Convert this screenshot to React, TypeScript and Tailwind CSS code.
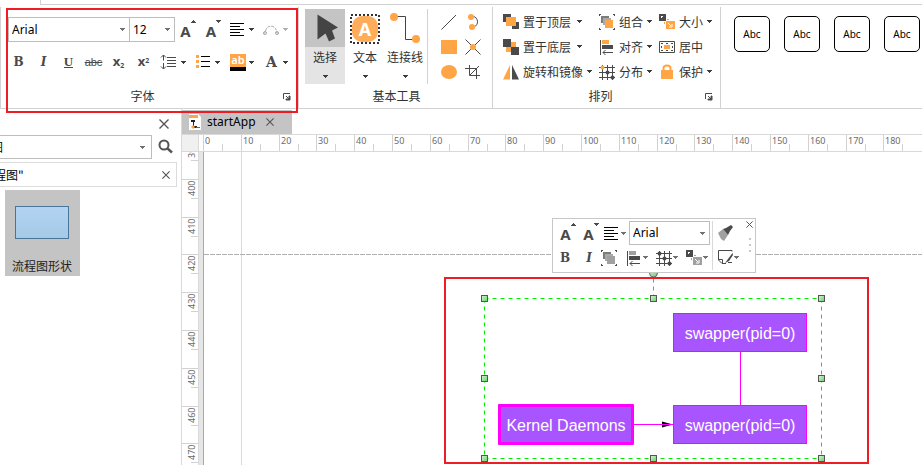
import type { ReactNode } from "react";

const ORANGE = "#ffa545";
const DARK = "#4a4a4a";
const GREY = "#a0a0a0";

type Tint = { accent?: string };

function Caret({ className = "text-[#3c3c3c]" }: { className?: string }) {
  return (
    <svg width="5" height="3" viewBox="0 0 5 3" className={`shrink-0 ${className}`} aria-hidden="true">
      <path d="M0 0H5V1H4V2H3V3H2V2H1V1H0Z" fill="currentColor" shapeRendering="crispEdges" />
    </svg>
  );
}

function Icon({ w = 16, h = 16, children }: { w?: number; h?: number; children: ReactNode }) {
  return (
    <svg width={w} height={h} viewBox={`0 0 ${w} ${h}`} className="block shrink-0" fill="none" aria-hidden="true">
      {children}
    </svg>
  );
}

function FontSelect({ label, options, className }: { label: string; options: string[]; className: string }) {
  return (
    <div className={`flex shrink-0 items-center border border-[#bdbdbd] bg-white pr-1 ${className}`}>
      <select
        aria-label={label}
        className="h-full w-full min-w-0 appearance-none bg-transparent pl-[3px] font-['Noto_Sans',sans-serif] text-[12px] leading-4 text-black outline-none"
      >
        {options.map((o) => (
          <option key={o}>{o}</option>
        ))}
      </select>
      <Caret className="text-[#707070]" />
    </div>
  );
}

function ToolButton({ label, className = "w-[25px] justify-center", children }: { label: string; className?: string; children: ReactNode }) {
  return (
    <button type="button" aria-label={label} title={label} className={`flex h-6 shrink-0 items-center text-[#4a4a4a] ${className}`}>
      {children}
    </button>
  );
}

function DropButton({ label, muted, children }: { label: string; muted?: boolean; children: ReactNode }) {
  return (
    <button type="button" aria-label={label} title={label} className="flex h-6 w-[34px] shrink-0 items-center gap-[3px] pl-[2px] text-[#4a4a4a]">
      <span className="flex w-[18px] items-center">{children}</span>
      <Caret className={muted ? "text-[#b0b0b0]" : undefined} />
    </button>
  );
}

function GrowLetter({ up }: { up?: boolean }) {
  return (
    <span className="flex items-start">
      <span className="pt-[2px] font-['Noto_Sans',sans-serif] text-[15px] font-bold leading-[18px]">A</span>
      <Icon w={5} h={3}>
        <path d={up ? "M2 0H3V1H4V2H5V3H0V2H1V1H2Z" : "M0 0H5V1H4V2H3V3H2V2H1V1H0Z"} fill={DARK} />
      </Icon>
    </span>
  );
}

const AlignLines = () => (
  <Icon w={18} h={15}>
    <path d="M2 1.5H16M2 4.5H12M2 7.5H16M2 10.5H12M2 13.5H16" stroke="#000" strokeWidth="1" />
  </Icon>
);

const GroupIcon = ({ accent = ORANGE }: Tint) => (
  <Icon>
    <path d="M0 0H2V1H1V2H0ZM14 0H16V2H15V1H14ZM0 14H1V15H2V16H0ZM15 14H16V16H14V15H15Z" fill={DARK} />
    <path d="M2 2H10V9H2Z" fill="#7c7c7c" />
    <path d="M4 4H12V11H4Z" fill="#a9a9a9" />
    <path d="M6 6H14V14H6Z" fill={accent} />
  </Icon>
);

const AlignIcon = ({ accent = ORANGE }: Tint) => (
  <Icon>
    <path d="M1.5 1V16" stroke={DARK} />
    <path d="M3 1H10V5H3Z" fill={accent} />
    <path d="M3 6H14V10H3Z" fill={DARK} />
    <path d="M4 13.5H14M6.5 11L4 13.5L6.5 16" stroke={DARK} />
  </Icon>
);

const GridIcon = ({ accent = ORANGE }: Tint) => (
  <Icon>
    <path d="M3.5 1V16M8.5 1V16M13.5 1V16M0 3.5H16M0 8.5H16M0 13.5H16" stroke={DARK} />
    <circle cx="3.5" cy="3.5" r="2" fill={accent} />
    <circle cx="8.5" cy="8.5" r="2" fill={DARK} />
    <circle cx="13.5" cy="13.5" r="2" fill={DARK} />
  </Icon>
);

const SizeIcon = ({ accent = ORANGE }: Tint) => (
  <Icon>
    <path d="M0 0H7V7H0Z" fill={DARK} />
    <path d="M7 7H16V15H7Z" fill={accent} />
    <path d="M2 2H4V3H3V4H2Z" fill="#fff" />
    <path d="M9 9L12 12M13 10V13H10" stroke="#fff" />
    <path d="M8 5H10V6H8ZM5 8H6V10H5Z" fill={accent} />
  </Icon>
);

const FrontIcon = () => (
  <Icon>
    <path d="M0 0H8V8H0ZM9 8H16V15H9Z" fill={DARK} />
    <path d="M3 3H13V12H3Z" fill={ORANGE} />
  </Icon>
);

const BackIcon = () => (
  <Icon>
    <path d="M3 3H13V13H3Z" fill={ORANGE} />
    <path d="M0 0H8V8H0ZM8 8H16V16H8Z" fill={DARK} />
  </Icon>
);

const MirrorIcon = () => (
  <Icon>
    <path d="M0 15.5L7 1V15.5Z" fill={ORANGE} />
    <path d="M16 15.5L9 1V15.5Z" fill={DARK} />
  </Icon>
);

const CenterIcon = () => (
  <Icon>
    <path d="M0.5 2.5H15.5V13.5H0.5Z" stroke={DARK} />
    <path d="M5 6H11V10H5Z" fill={ORANGE} />
    <path d="M2 4H4V5H2ZM12 4H14V5H12ZM2 11H4V12H2ZM12 11H14V12H12ZM2 7H3V9H2ZM13 7H14V9H13ZM7 4H9V5H7ZM7 11H9V12H7Z" fill={DARK} />
  </Icon>
);

const LockIcon = () => (
  <Icon>
    <path d="M4.5 7V4C4.5 0.5 11.5 0.5 11.5 4V7" stroke={ORANGE} strokeWidth="2" />
    <path d="M2 6H14V15H2Z" fill={ORANGE} />
  </Icon>
);

function Launcher({ className }: { className: string }) {
  return (
    <button type="button" aria-label="更多" className={`absolute ${className}`}>
      <Icon w={8} h={8}>
        <path d="M0.5 6V0.5H7M3 3L6 6" stroke={DARK} />
        <path d="M7 3V7H3V6H6V3Z" fill={DARK} stroke={DARK} />
      </Icon>
    </button>
  );
}

function RibbonGroup({ title, className = "", launcher, children }: { title: string; className?: string; launcher?: string; children: ReactNode }) {
  return (
    <section className={`relative flex shrink-0 flex-col border-r border-[#d2d2d2] ${className}`}>
      <div className="h-[77px] pt-[2px]">{children}</div>
      <h2 className="h-6 text-center text-[12px] leading-6 text-[#333]">{title}</h2>
      {launcher && <Launcher className={launcher} />}
    </section>
  );
}

function BigTool({ label, active, children }: { label: string; active?: boolean; children: ReactNode }) {
  return (
    <button type="button" className={`flex h-[75px] w-10 flex-col items-center text-[12px] text-[#333] ${active ? "bg-[#e4e4e4]" : ""}`}>
      <span className={`h-[38px] w-10 ${active ? "bg-[#c4c4c4]" : ""}`}>{children}</span>
      <span className="mb-2 whitespace-nowrap leading-5">{label}</span>
      <Caret />
    </button>
  );
}

function ArrangeItem({ icon, label, caret = true, near }: { icon: ReactNode; label: string; caret?: boolean; near?: boolean }) {
  return (
    <button type="button" className="flex h-[25px] items-center gap-1 whitespace-nowrap text-[12px] leading-4 text-[#333]">
      {icon}
      <span className={near ? "" : "pr-[2px]"}>{label}</span>
      {caret && <Caret />}
    </button>
  );
}

function FontGroup() {
  return (
    <RibbonGroup title="字体" className="w-[299px] border-l pr-[14px]" launcher="left-[282px] top-[86px]">
      <div className="flex items-center pl-[7px] pt-2">
        <FontSelect label="字体名称" options={["Arial", "Times New Roman"]} className="h-[25px] w-[122px]" />
        <FontSelect label="字号" options={["12", "14", "16"]} className="-ml-px h-[25px] w-[46px]" />
        <ToolButton label="增大字号" className="w-[26px] justify-center"><GrowLetter up /></ToolButton>
        <ToolButton label="减小字号" className="w-[25px] justify-center"><GrowLetter /></ToolButton>
        <DropButton label="文本对齐"><AlignLines /></DropButton>
        <DropButton label="弧形文字" muted>
          <Icon w={18}>
            <path d="M3.5 9C5 2.5 13 2.5 14.5 9M1 12L4 10M14 10L17 12" stroke="#a8a8a8" strokeDasharray="3 1" />
            <circle cx="3" cy="11" r="1.5" stroke="#a8a8a8" />
            <circle cx="15" cy="11" r="1.5" stroke="#a8a8a8" />
          </Icon>
        </DropButton>
      </div>
      <div className="flex items-center pl-[5px] pt-2">
        <ToolButton label="加粗"><span className="font-['DejaVu_Serif',serif] text-[12px] font-bold">B</span></ToolButton>
        <ToolButton label="倾斜"><span className="font-['DejaVu_Serif',serif] text-[12px] font-bold italic">I</span></ToolButton>
        <ToolButton label="下划线"><span className="border-b border-[#4a4a4a] font-['Liberation_Serif',serif] text-[13px] font-bold leading-[11px]">U</span></ToolButton>
        <ToolButton label="删除线"><span className="font-['Liberation_Sans',sans-serif] text-[11px] line-through">abc</span></ToolButton>
        <ToolButton label="下标"><span className="font-['Noto_Sans',sans-serif] text-[13px] font-bold">x<sub className="text-[7px]">2</sub></span></ToolButton>
        <ToolButton label="上标"><span className="font-['Noto_Sans',sans-serif] text-[13px] font-bold">x<sup className="text-[7px]">2</sup></span></ToolButton>
        <div className="flex pl-[2px]">
          <DropButton label="行距">
            <Icon w={18}>
              <path d="M3.5 1V6.5M1 3.5L3.5 1L6 3.5M3.5 9V15M1 12.5L3.5 15L6 12.5" stroke={DARK} />
              <path d="M7 3.5H16M7 6.5H16M7 9.5H16M7 12.5H16" stroke={DARK} />
            </Icon>
          </DropButton>
          <DropButton label="项目符号">
            <Icon w={18}>
              <path d="M2 1H5V4H2ZM2 6H5V9H2ZM2 11H5V14H2Z" fill={ORANGE} />
              <path d="M7 2.5H16M7 7.5H16M7 12.5H16" stroke="#000" />
            </Icon>
          </DropButton>
          <DropButton label="突出显示">
            <span className="ml-[2px] flex w-4 flex-col border-b-4 border-black bg-[#ffa545] pb-px text-center font-['Noto_Sans',sans-serif] text-[11px] font-semibold leading-3 text-white">
              ab
            </span>
          </DropButton>
          <DropButton label="字体颜色"><span className="ml-1 font-['DejaVu_Serif',serif] text-[14px] font-bold">A</span></DropButton>
        </div>
      </div>
    </RibbonGroup>
  );
}

function BasicTools() {
  return (
    <RibbonGroup title="基本工具" className="w-[194px] pl-[6px] pr-1">
      <div className="flex">
        <BigTool label="选择" active>
          <Icon w={40} h={38}>
            <path d="M12.5 5.5L33 18.5L27 21.5L30 29.5L24 32.5L20.5 24.5L12.5 30.5Z" fill="#444" />
          </Icon>
        </BigTool>
        <BigTool label="文本">
          <Icon w={40} h={38}>
            <rect x="6" y="6" width="28" height="28" stroke="#333" strokeWidth="2" strokeDasharray="2 2" />
            <rect x="7" y="7" width="26" height="26" rx="10" fill="#ffad5b" />
            <text x="20" y="27" textAnchor="middle" fontFamily="Noto Sans, sans-serif" fontWeight="700" fontSize="18" fill="#fff">A</text>
          </Icon>
        </BigTool>
        <BigTool label="连接线">
          <Icon w={40} h={38}>
            <path d="M9 7.5H20.5V30.5H31" stroke="#444" />
            <circle cx="9" cy="8" r="4" fill={ORANGE} />
            <circle cx="31" cy="30" r="4" fill={ORANGE} />
          </Icon>
        </BigTool>
        <div className="ml-[2px] grid grid-cols-[24px_24px] grid-rows-[25px_25px_25px] place-items-center border-l border-[#d2d2d2] pl-[9px]">
          <ToolButton label="直线"><Icon><path d="M0.5 15.5L15 1" stroke={DARK} /></Icon></ToolButton>
          <ToolButton label="弧线">
            <Icon>
              <path d="M7 2C14 3 14 11 9 13" stroke={DARK} />
              <circle cx="6" cy="3" r="3" fill={ORANGE} />
              <circle cx="7" cy="13" r="3" fill={ORANGE} />
            </Icon>
          </ToolButton>
          <ToolButton label="矩形"><Icon><path d="M0 1H16V15H0Z" fill={ORANGE} /></Icon></ToolButton>
          <ToolButton label="交叉">
            <Icon>
              <path d="M0.5 0.5L15.5 15.5M15.5 0.5L0.5 15.5" stroke={DARK} />
              <circle cx="8" cy="8" r="3" fill={ORANGE} />
            </Icon>
          </ToolButton>
          <ToolButton label="椭圆"><Icon><ellipse cx="8" cy="8" rx="8" ry="7" fill={ORANGE} /></Icon></ToolButton>
          <ToolButton label="裁剪">
            <Icon><path d="M4.5 1V11.5H15M0 4.5H11.5V15M5 11L14 2" stroke={DARK} /></Icon>
          </ToolButton>
        </div>
      </div>
    </RibbonGroup>
  );
}

function ArrangeGroup() {
  return (
    <RibbonGroup title="排列" className="w-[228px] pr-3" launcher="left-[212px] top-[86px]">
      <div className="grid grid-cols-[96px_60px_60px] pl-[10px]">
        <ArrangeItem icon={<FrontIcon />} label="置于顶层" />
        <ArrangeItem icon={<GroupIcon />} label="组合" near />
        <ArrangeItem icon={<SizeIcon />} label="大小" near />
        <ArrangeItem icon={<BackIcon />} label="置于底层" />
        <ArrangeItem icon={<AlignIcon />} label="对齐" near />
        <ArrangeItem icon={<CenterIcon />} label="居中" caret={false} />
        <ArrangeItem icon={<MirrorIcon />} label="旋转和镜像" near />
        <ArrangeItem icon={<GridIcon />} label="分布" near />
        <ArrangeItem icon={<LockIcon />} label="保护" near />
      </div>
    </RibbonGroup>
  );
}

function Ribbon() {
  return (
    <header className="relative">
      <div className="flex h-[5px] pl-10">
        <div className="flex-1 border-b border-l border-[#d2d2d2]" />
      </div>
      <div className="flex overflow-hidden border-b border-[#d2d2d2] pt-[2px]">
        <FontGroup />
        <BasicTools />
        <ArrangeGroup />
        <div className="flex gap-[14px] pl-[13px] pt-[9px]">
          {[1, 2, 3, 4].map((n) => (
            <button key={n} type="button" className="h-9 w-9 shrink-0 rounded-[5px] border border-black font-['Noto_Sans',sans-serif] text-[10px] text-black">
              Abc
            </button>
          ))}
        </div>
      </div>
      <div className="pointer-events-none absolute left-[6px] top-2 z-10 h-[105px] w-[292px] border-2 border-[#ee1c25]" />
    </header>
  );
}

function Cross({ size = 10 }: { size?: number }) {
  return (
    <svg width={size} height={size} viewBox="0 0 10 10" className="block" aria-hidden="true">
      <path d="M0.5 0.5L9.5 9.5M9.5 0.5L0.5 9.5" stroke="#555" strokeWidth="1.4" />
    </svg>
  );
}

function ShapePanel() {
  return (
    <aside className="w-[181px] shrink-0 overflow-hidden">
      <div className="flex h-[26px] items-center justify-end pr-3 pt-[3px]">
        <button type="button" aria-label="关闭面板"><Cross /></button>
      </div>
      <div className="flex items-center">
        <div className="flex h-6 w-[152px] items-center overflow-hidden border border-l-0 border-[#bdbdbd] pr-[6px]">
          <input aria-label="搜索形状" defaultValue="流程图" className="-ml-[33px] w-full flex-1 bg-transparent text-[12px] text-black outline-none" />
          <Caret className="text-[#707070]" />
        </div>
        <button type="button" aria-label="搜索" className="ml-[6px]">
          <Icon>
            <circle cx="6" cy="6" r="4.5" stroke="#555" strokeWidth="2" />
            <path d="M9.5 9.5L14 13.5" stroke="#555" strokeWidth="2.5" />
          </Icon>
        </button>
      </div>
      <div className="mt-[3px] flex h-[25px] w-[177px] items-center justify-between border border-l-0 border-[#dcdcdc] pr-[6px]">
        <span className="-ml-[6px] text-[12px] text-black">程图"</span>
        <button type="button" aria-label="关闭分类"><Cross size={8} /></button>
      </div>
      <button type="button" className="ml-[5px] mt-[3px] flex h-[86px] w-[75px] flex-col items-center bg-[#c4c4c4] pr-px pt-4 text-[12px] text-[#222]">
        <span className="h-[33px] w-[54px] border border-[#4b7598] bg-linear-to-b from-[#b2d4f2] to-[#a6c9e8]" />
        <span className="mt-[18px] leading-[18px]">流程图形状</span>
      </button>
    </aside>
  );
}

/* Ten ruler units take 37.8 px; every cell is snapped to whole pixels. */
const UNIT = 37.8;
const cell = (i: number) => Math.round((i + 1) * UNIT) - Math.round(i * UNIT);
const cellsIn = (length: number) => Array.from({ length: Math.max(1, Math.ceil(length / UNIT)) }, (_, i) => i);

function HorizontalRuler() {
  return (
    <div className="flex h-[18px] border-y border-[#d9d9d9]">
      <div className="w-[17px] shrink-0 border-r border-[#d9d9d9] bg-[#f0f0f0]" />
      <div className="flex min-w-0 flex-1 overflow-hidden pl-1">
        {cellsIn(window.innerWidth - 204).map((i) => (
          <div key={i} className="flex shrink-0 items-end border-l border-[#d2d2d2]" style={{ width: cell(i) }}>
            <span className="h-full w-[18px] pl-px font-['Noto_Sans',sans-serif] text-[9px] leading-[11px] text-[#6c6c6c]">{i * 10}</span>
            <span className="h-[7px] w-px bg-[#d2d2d2]" />
          </div>
        ))}
      </div>
    </div>
  );
}

function VerticalRuler() {
  return (
    <div className="w-[17px] shrink-0 overflow-hidden border-r border-[#d9d9d9]">
      <div className="-mt-[11px]">
        {cellsIn(window.innerHeight - 141).map((i) => (
          <div key={i} className="flex flex-col items-end border-t border-[#d2d2d2]" style={{ height: cell(i) }}>
            <span className="h-[18px] w-full shrink-0 rotate-180 pr-1 pb-px text-right font-['Noto_Sans',sans-serif] text-[9px] leading-[11px] text-[#6c6c6c] [writing-mode:vertical-rl]">
              {390 + i * 10}
            </span>
            <span className="h-px w-[7px] shrink-0 bg-[#d2d2d2]" />
          </div>
        ))}
      </div>
    </div>
  );
}

function MiniDrop({ label, className, children }: { label: string; className: string; children: ReactNode }) {
  return (
    <button type="button" aria-label={label} title={label} className={`flex h-6 shrink-0 items-center gap-px ${className}`}>
      {children}
      <Caret className="text-[#707070]" />
    </button>
  );
}

function MiniToolbar() {
  return (
    <div className="absolute left-[352px] top-[66px] z-10 flex w-[204px] border border-[#c8c8c8] bg-white py-[2px]">
      <div className="w-[160px] border-r border-[#d9d9d9]">
        <div className="flex h-6 items-center pl-[3px]">
          <ToolButton label="增大字号" className="w-6 justify-center"><GrowLetter up /></ToolButton>
          <ToolButton label="减小字号" className="w-[22px] justify-center"><GrowLetter /></ToolButton>
          <MiniDrop label="文本对齐" className="w-[27px]"><AlignLines /></MiniDrop>
          <FontSelect label="浮动栏字体" options={["Arial"]} className="h-6 w-[81px]" />
        </div>
        <div className="flex h-[25px] items-center">
          <ToolButton label="加粗" className="w-6 justify-center"><span className="font-['DejaVu_Serif',serif] text-[12px] font-bold">B</span></ToolButton>
          <ToolButton label="倾斜" className="w-6 justify-center"><span className="font-['DejaVu_Serif',serif] text-[12px] font-bold italic">I</span></ToolButton>
          <ToolButton label="组合" className="w-[25px]"><GroupIcon accent={GREY} /></ToolButton>
          <MiniDrop label="对齐" className="w-[30px]"><AlignIcon accent={GREY} /></MiniDrop>
          <MiniDrop label="分布" className="w-[30px]"><GridIcon accent={DARK} /></MiniDrop>
          <MiniDrop label="大小" className="w-6"><SizeIcon accent={GREY} /></MiniDrop>
        </div>
      </div>
      <div className="flex flex-col pl-1">
        <ToolButton label="格式刷" className="w-5">
          <Icon>
            <path d="M1 8L6 4L11 10L7 16L4 14L3 12Z" fill={GREY} />
            <path d="M6 4L9 3L14 0L16 2L13 6L11 10Z" fill={DARK} />
          </Icon>
        </ToolButton>
        <MiniDrop label="样式" className="w-6">
          <Icon>
            <path d="M15 2.5V1.5H1.5V11L5 14.5H9" stroke={DARK} />
            <path d="M15.5 4L11 10L8 14L12 12L16 6Z" fill={DARK} />
            <path d="M1 10.5H5.5V15M11 13.5H15" stroke={DARK} />
          </Icon>
        </MiniDrop>
      </div>
      <div className="flex flex-1 flex-col items-end gap-[10px] pr-[2px]">
        <button type="button" aria-label="关闭浮动栏"><Cross size={7} /></button>
        <span className="mr-[2px] flex flex-col gap-1">
          <i className="h-[2px] w-[2px] bg-[#c8c8c8]" />
          <i className="h-[2px] w-[2px] bg-[#c8c8c8]" />
          <i className="h-[2px] w-[2px] bg-[#c8c8c8]" />
        </span>
      </div>
    </div>
  );
}

const handles = [
  [284, 146], [453, 146], [621, 146],
  [284, 226], [621, 226],
  [284, 306], [453, 306], [621, 306],
];

function Node({ text, className }: { text: string; className: string }) {
  return (
    <div className={`absolute flex items-center justify-center whitespace-nowrap border-[#ff00ff] bg-[#a854ff] pt-[2px] font-['Liberation_Sans',Arial,sans-serif] text-[16px] text-white ${className}`}>
      {text}
    </div>
  );
}

function Canvas() {
  return (
    <main className="relative min-w-0 flex-1 overflow-hidden border-l border-[#e6e6e6]">
      <div className="absolute inset-y-0 left-0 w-1 border-r border-[#aaa] bg-[#e6e6e6]" />
      <div className="absolute inset-y-0 left-[41px] w-px bg-[#d9d9d9]" />
      <svg className="absolute left-1 top-[102px] h-px w-full" aria-hidden="true">
        <path d="M0 0.5H4000" stroke="#b0b0b0" strokeDasharray="5 1" />
      </svg>
      <svg className="absolute left-0 top-0" width="720" height="320" viewBox="0 0 720 320" fill="none" aria-hidden="true">
        <defs>
          <linearGradient id="handle" x1="0" y1="0" x2="1" y2="1">
            <stop offset="0" stopColor="#dcf5dc" />
            <stop offset="1" stopColor="#62cf62" />
          </linearGradient>
        </defs>
        <path d="M284.5 146.5H621.5M284.5 306.5H621.5M284.5 146.5V306.5M621.5 146.5V306.5M453.5 146.5V122" stroke="#00f000" strokeDasharray="4 4" />
        <circle cx="453.5" cy="121" r="4" fill="url(#handle)" stroke="#666" />
        <path d="M540.5 200V254" stroke="#ff00ff" />
        <path d="M462 269.5L473 272.5L462 275.5Z" fill="#000" />
        <path d="M434 272.5H473" stroke="#ff00ff" />
        {handles.map(([x, y]) => (
          <rect key={`${x}-${y}`} x={x - 2.5} y={y - 2.5} width="6" height="6" fill="url(#handle)" stroke="#555" />
        ))}
      </svg>
      <Node text="swapper(pid=0)" className="left-[473px] top-[161px] h-[39px] w-[134px] border" />
      <Node text="swapper(pid=0)" className="left-[473px] top-[253px] h-[39px] w-[134px] border" />
      <Node text="Kernel Daemons" className="left-[298px] top-[252px] h-[41px] w-[136px] rounded-[1px] border-[3px]" />
      <div className="pointer-events-none absolute left-[244px] top-[125px] z-20 h-[187px] w-[425px] border-2 border-[#ee1c25]" />
      <MiniToolbar />
    </main>
  );
}

function Editor() {
  return (
    <section className="flex min-w-0 flex-1 flex-col border-l border-[#d9d9d9]">
      <div className="flex h-[25px] pt-px">
        <div className="flex w-[110px] items-center bg-[#c4c4c4] pl-[7px]">
          <Icon w={12} h={16}>
            <path d="M0 0H9L12 3V16H0Z" fill="#fff" />
            <path d="M0 1H9V4H0Z" fill={ORANGE} />
            <path d="M2 6H6V8H5V12H8V14H5L4 12V8H2Z" fill="#222" />
            <path d="M4 11L6 13L4 15L2 13Z" fill={ORANGE} />
            <path d="M7 13.5H11" stroke="#666" />
          </Icon>
          <span className="ml-[6px] w-14 font-['Noto_Sans',sans-serif] text-[12px] text-black">startApp</span>
          <button type="button" aria-label="关闭 startApp" className="ml-[3px]"><Cross size={8} /></button>
        </div>
      </div>
      <HorizontalRuler />
      <div className="flex min-h-0 flex-1">
        <VerticalRuler />
        <Canvas />
      </div>
    </section>
  );
}

export default function App() {
  return (
    <div className="flex h-screen flex-col overflow-hidden bg-white font-['Noto_Sans_CJK_SC',sans-serif]">
      <Ribbon />
      <div className="flex min-h-0 flex-1">
        <ShapePanel />
        <Editor />
      </div>
    </div>
  );
}
